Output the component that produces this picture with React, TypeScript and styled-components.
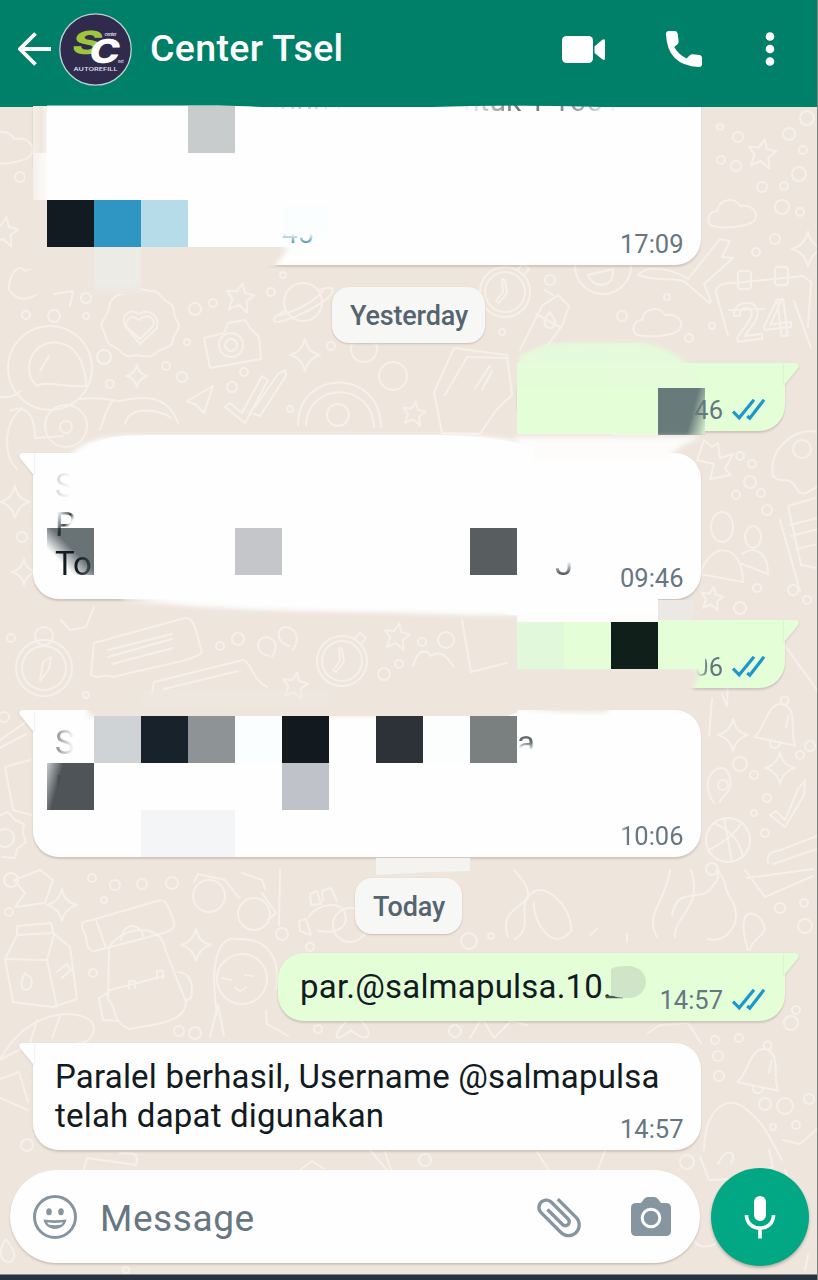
import React from "react";
import styled, { createGlobalStyle, css } from "styled-components";

const colors = {
  header: "#018069",
  paper: "#eee5dd",
  doodle: "#f7f0ea",
  incoming: "#fefefe",
  outgoing: "#e4fed8",
  ink: "#111b21",
  muted: "#667781",
  ticks: "#1b97cb",
  icon: "#8696a0",
  accent: "#02a884",
};

const GlobalStyle = createGlobalStyle`
  * { box-sizing: border-box; }
  body { margin: 0; background: ${colors.paper}; font-family: Roboto, sans-serif; }
`;

const Screen = styled.div`
  position: relative;
  width: 818px;
  height: 1280px;
  display: flex;
  flex-direction: column;
  overflow: hidden;
  background: ${colors.paper};
  border-right: 1px solid #7c8281;
`;

const Wallpaper = styled.svg`
  position: absolute;
  inset: 0;
  fill: none;
  stroke: ${colors.doodle};
  stroke-width: 2;
  stroke-linecap: round;
  stroke-linejoin: round;
`;

const Header = styled.header`
  position: relative;
  flex: none;
  display: flex;
  align-items: center;
  height: 107px;
  padding: 0 41px 9px 18px;
  background: ${colors.header};
  margin-right: -1px;
`;

const Avatar = styled.svg`
  margin-left: 7px;
  flex: none;
`;

const Title = styled.h1`
  margin: 0 auto 2px 18px;
  color: #fff;
  font-size: 37.5px;
  line-height: 44px;
  font-weight: 500;
  letter-spacing: 0.35px;
`;

const Actions = styled.div`
  display: flex;
  align-items: center;
  gap: 61px;
`;

const Chat = styled.main`
  position: relative;
  flex: none;
  display: flex;
  flex-direction: column;
  height: 1063px;
`;

const DatePill = styled.div<{ $gap: number; $width: number }>`
  align-self: center;
  flex: none;
  display: flex;
  align-items: center;
  justify-content: center;
  width: ${(p) => p.$width}px;
  height: 56px;
  margin-top: ${(p) => p.$gap}px;
  padding: 1px 0 0 1px;
  border-radius: 17px;
  background: #f7f7f5;
  box-shadow: 0 1px 2px rgba(80, 60, 40, 0.22);
  color: #54656f;
  font-size: 27px;
  font-weight: 500;
  letter-spacing: -0.15px;
`;

const Bubble = styled.section<{ $out?: boolean; $gap?: number; $width?: number; $height: number; $scrolled?: boolean }>`
  position: relative;
  flex: none;
  display: flex;
  width: ${(p) => p.$width ?? 668}px;
  height: ${(p) => p.$height}px;
  margin-top: ${(p) => p.$gap ?? 0}px;
  padding: 13px 17.5px 7.5px 22px;
  border-radius: 26px;
  box-shadow: 0 1.5px 2px rgba(90, 70, 50, 0.2);
  ${(p) =>
    p.$out
      ? css`
          align-self: flex-end;
          margin-right: 32px;
          padding-right: 20px;
          border-top-right-radius: 0;
          background: ${colors.outgoing};
        `
      : css`
          align-self: flex-start;
          margin-left: 33px;
          border-top-left-radius: 0;
          background: ${colors.incoming};
        `}
  ${(p) => p.$scrolled && css`border-top-right-radius: 0;`}
`;

const TailShape = styled.svg<{ $out?: boolean }>`
  position: absolute;
  top: 0;
  overflow: visible;
  ${(p) => (p.$out ? "right: -14px; transform: scaleX(-1);" : "left: -14px;")}
  filter: drop-shadow(0 1px 1px rgba(90, 70, 50, 0.16));
`;

const Message = styled.p`
  flex: 1 1 0;
  min-width: 0;
  margin: 0.5px 0 0;
  color: ${colors.ink};
  font-size: 33px;
  line-height: 39px;
  letter-spacing: 0.2px;
  white-space: pre;
`;

const Meta = styled.div`
  position: relative;
  flex: none;
  align-self: flex-end;
  display: flex;
  align-items: center;
  gap: 9px;
  margin-left: auto;
`;

const Time = styled.time<{ $fade?: number }>`
  color: ${colors.muted};
  font-size: 25.5px;
  line-height: 27px;
  ${(p) => p.$fade && css`mask-image: linear-gradient(90deg, transparent ${p.$fade}px, #000 ${p.$fade + 12}px);`}
`;

/* Pixelation grid laid over the private part of a bubble. */
const Mosaic = styled.div<{ $top: number; $edge?: boolean }>`
  position: absolute;
  inset: ${(p) => p.$top}px auto auto 0;
  display: grid;
  grid-template-columns: ${(p) => (p.$edge ? "14px" : "")} repeat(5, 47px) ${(p) => (p.$edge ? "repeat(8, 47px)" : "")};
  grid-auto-rows: 47px;
`;

const Tile = styled.i<{ $col: number; $row?: number; $span?: number; $rows?: number; $fill: string }>`
  grid-column: ${(p) => p.$col} / span ${(p) => p.$span ?? 1};
  grid-row: ${(p) => p.$row ?? 1} / span ${(p) => p.$rows ?? 1};
  background: ${(p) => p.$fill};
`;

const Smudge = styled.svg`
  position: absolute;
  inset: 0 auto auto 0;
  overflow: visible;
`;

/* Part of a letter left visible at the edge of a smudge. */
const Remnant = styled.span<{ $x: number; $y: number; $mask: string; $color?: string; $size?: number }>`
  position: absolute;
  left: ${(p) => p.$x}px;
  top: ${(p) => p.$y}px;
  color: ${(p) => p.$color ?? colors.ink};
  font-size: ${(p) => p.$size ?? 33}px;
  line-height: 39px;
  white-space: pre;
  mask-image: ${(p) => p.$mask};
`;

const Footer = styled.footer`
  position: relative;
  display: flex;
  align-items: center;
  gap: 11px;
  height: 93px;
  padding-left: 10px;
`;

const Composer = styled.div`
  display: flex;
  align-items: center;
  width: 690px;
  height: 93px;
  padding: 0 28px 0 22px;
  border-radius: 47px;
  background: #fefefe;
  box-shadow: 0 1.5px 2px rgba(90, 70, 50, 0.25);
`;

const Placeholder = styled.span`
  margin: 5px auto 0 22px;
  color: ${colors.muted};
  font-size: 37px;
  line-height: 44px;
  letter-spacing: 0.6px;
`;

const MicButton = styled.button`
  display: flex;
  align-items: center;
  justify-content: center;
  width: 98px;
  height: 98px;
  flex: none;
  padding: 0;
  border: 0;
  border-radius: 50%;
  background: ${colors.accent};
  box-shadow: 0 2px 3px rgba(60, 50, 40, 0.3);
`;

const SystemBar = styled.div`
  position: relative;
  height: 6px;
  margin: auto -1px 0 0;
  background: #26333e;
  border-top: 1px solid #87898a;
`;

const CameraSlot = styled.span`
  display: flex;
  margin-left: 44px;
`;

const Tail = ({ out }: { out?: boolean }) => (
  <TailShape $out={out} width="15" height="24" viewBox="0 0 15 24">
    <path d="M15 0H4C.4 0-.9 3 1.300 5.600L14 21h1z" fill={out ? colors.outgoing : colors.incoming} />
  </TailShape>
);

const Ticks = () => (
  <svg width="33" height="23" viewBox="0 0 33 23" fill="none" stroke={colors.ticks} strokeWidth="3.200">
    <path d="M1 12.500l6.200 6.300L22 .8M15.200 17l2.600 2.200L32 .8" />
  </svg>
);

const Star = ({ x, y, s = 1 }: { x: number; y: number; s?: number }) => (
  <path transform={`translate(${x} ${y}) rotate(10) scale(${s})`} strokeWidth={2 / s} d="M0-14l4 9 10 1-7 7 3 11-10-6-9 6 2-11-7-7 10-1z" />
);
const Sparkle = ({ x, y, s = 1 }: { x: number; y: number; s?: number }) => (
  <path transform={`translate(${x} ${y}) scale(${s})`} strokeWidth={2 / s} d="M0-16Q2-3 15 0 3 3 0 16-3 3-15 0-3-3 0-16z" />
);
const Cloud = ({ x, y, s = 1 }: { x: number; y: number; s?: number }) => (
  <path transform={`translate(${x} ${y}) scale(${s})`} strokeWidth={2 / s} d="M-20 13c-7-5-3-15 5-15 2-12 18-15 23-5 12-2 20 7 14 15-7 6-30 8-42 5z" />
);
const Bell = ({ x, y }: { x: number; y: number }) => (
  <g transform={`translate(${x} ${y}) rotate(12)`}>
    <path d="M-22 20c9-10 5-36 20-38 18 0 13 28 22 38zM-6 20c0 9 10 9 11 0M7-8v12" />
    <circle cy="-22" r="4" />
  </g>
);
const Clock = ({ x, y }: { x: number; y: number }) => (
  <g transform={`translate(${x} ${y})`}>
    <circle r="25" />
    <circle r="20" />
    <path d="M-3-13l3 1 2 13-8 10-3-2 7-9zM13-23l5-5 6 5-4 5" />
  </g>
);

const dots = [
  [20, 177, 5], [26, 315, 4], [54, 316, 6], [86, 298, 5], [86, 316, 3], [195, 309, 6], [213, 303, 4], [271, 292, 4], [283, 275, 3], [187, 342, 3],
  [104, 357, 7], [166, 366, 4], [182, 377, 5], [232, 387, 5], [290, 409, 3], [244, 372, 4], [110, 384, 4], [331, 346, 4], [738, 137, 5], [720, 127, 3],
  [789, 134, 6], [807, 118, 7], [721, 160, 4], [736, 166, 5], [803, 150, 4], [799, 174, 7], [762, 187, 5], [784, 186, 4], [782, 207, 7], [800, 212, 4],
  [775, 239, 5], [756, 252, 4], [550, 280, 5], [622, 316, 5], [667, 297, 3], [689, 338, 4], [712, 326, 3], [502, 332, 3], [740, 456, 4], [752, 464, 4],
  [750, 482, 6], [736, 495, 4], [761, 493, 4], [767, 510, 5], [757, 588, 4], [793, 590, 5], [740, 608, 6], [807, 600, 4], [11, 638, 4], [220, 646, 4],
  [238, 639, 6], [384, 674, 6], [399, 664, 4], [86, 695, 3], [446, 640, 8], [422, 642, 4], [22, 537, 5], [4, 717, 5], [740, 764, 7], [754, 775, 4],
  [800, 755, 4], [810, 746, 5], [767, 798, 4], [754, 813, 3], [765, 833, 4], [712, 869, 6], [11, 880, 7], [92, 878, 4], [115, 885, 5], [142, 884, 5],
  [172, 883, 6], [104, 900, 3], [9, 912, 4], [93, 973, 4], [282, 934, 6], [310, 947, 4], [179, 1031, 5], [195, 1033, 6], [318, 1029, 4], [469, 941, 8],
  [491, 936, 3], [780, 908, 5], [804, 903, 4], [805, 926, 7], [791, 1023, 7], [796, 1010, 4], [739, 1038, 4], [715, 1040, 4], [718, 1056, 5], [719, 1076, 5],
  [765, 1104, 6], [785, 1106, 8], [809, 1099, 5], [773, 1127, 3], [796, 1125, 4], [27, 1145, 6], [455, 1031, 6], [126, 1270, 3], [425, 1160, 6], [687, 1162, 7],
];

const Doodles = () => (
  <Wallpaper width="818" height="1280" viewBox="0 0 818 1280" aria-hidden>
    {dots.map(([x, y, r]) => (
      <circle key={`${x}-${y}`} cx={x} cy={y} r={r} />
    ))}
    <Cloud x={5} y={147} s={1.15} />
    <Cloud x={732} y={213} />
    <Cloud x={657} y={322} />
    <Star x={762} y={153} />
    <Star x={4} y={231} />
    <Star x={240} y={297} />
    <Star x={712} y={598} s={0.8} />
    <Star x={397} y={636} s={0.9} />
    <Star x={414} y={413} s={0.8} />
    <Star x={295} y={685} s={0.9} />
    <Sparkle x={137} y={376} s={0.7} />
    <Sparkle x={305} y={355} />
    <Sparkle x={15} y={502} />
    <Sparkle x={808} y={249} s={1.1} />
    <Sparkle x={733} y={735} />
    <Sparkle x={780} y={768} />
    <Sparkle x={62} y={905} />
    <Sparkle x={196} y={945} />
    <Sparkle x={24} y={572} s={0.8} />
    <Bell x={780} y={722} />
    <Bell x={763} y={1067} />
    <Clock x={505} y={292} />
    <Clock x={342} y={661} />
    {/* heart cookie */}
    <path d="M110 303c6-12 15-8 19-11 9-8 17 1 24-1 8 1 8 9 16 12 8 4 2 12 9 19 4 8-6 11-5 19-2 9-13 6-18 13-8 6-15-1-23 2-9 2-11-7-19-10-8-2-6-11-11-18-3-8 8-12 8-25z" />
    <path d="M140 339l-12-11c-5-7 3-15 11-8 8-8 18-1 14 6zM125 326c-5-12 6-18 14-12 10-6 21 2 18 14l-17 16zM9 285c3-17 12-20 16-14 10-6 21 3 19 13-1 10-16 17-25 14-6-3-11-6-10-13z" />
    {/* planet, camera, tumbling arrow */}
    <circle cx="303" cy="302" r="19" />
    <path d="M286 310c-8 5-14 8-12 11 4 6 60-20 59-31-1-4-7-2-14 0M280 315c14-3 34-13 43-24" />
    <path d="M204 338l20-5 4-10 17-3 6 9 8 8 2 22-51 9zM54 294l19-3-3 15" />
    <circle cx="231" cy="345" r="12" />
    <circle cx="231" cy="345" r="6" />
    {/* astronaut */}
    <circle cx="50" cy="368" r="42" />
    <path d="M31 379c-8-23 10-42 33-35 20 7 23 39 22 42-17 2-42-6-49 0zM40 371l9-15M0 397c17 1 20-6 20-6M80 399c24-3 33 2 40 2 35-8 50 0 58 22M22 408c-19 15-19 49-5 61M36 438l27-2M35 438c0-37-22-29-25-27M113 401c-10 10-9 25-14 29M125 424c5-20 37-14 46-6" />
    <circle cx="66" cy="426" r="21" />
    <circle cx="66" cy="427" r="6" />
    <path d="M187 401l26-15-9 27-8-8zM225 407l5-4 12 10 20-37 6 4-23 43zM255 407l23-33 7-4 1 6-26 40-6-2" />
    <path d="M298 425c0-56 82-58 83 2M306 425c2-44 66-44 68 2" />
    <circle cx="338" cy="415" r="11" />
    <circle cx="364" cy="349" r="13" />
    <circle cx="393" cy="376" r="14" />
    {/* smiley, aeroplane, bottle */}
    <circle cx="603" cy="266" r="28" />
    <path d="M588 275l25-6c2 20-20 20-25 6zM638 275c12-13 37-4 50 4l32-40 10 2-8 16 11 1-29 26c6 14 9 21 4 18l-23-20c-11-6-23 1-47-7zM520 350l22-44 16-11 11 11-7 20-18 24M536 314l24 13M545 290l8 5M550 312c-16 17 8 21 5 9z" />
    {/* calendar */}
    <path d="M728 336l-12-43c0-7 4-10 18-10l69-7 8 6-3 45M729 310l35-1M794 301l17 47" />
    <rect x="738" y="271" width="13" height="18" rx="3" />
    <rect x="775" y="267" width="13" height="18" rx="3" />
    <text x="735" y="342" fontFamily="Roboto, sans-serif" fontSize="52" fontWeight="500" transform="rotate(-7 735 342)">24</text>
    {/* gem, puzzle, doughnut, people, newspaper */}
    <path d="M442 433l-8-41 20-44 53 7 5 40-15 14-17 25zM445 395l22-38 40 1M475 388l15-22M482 390l10-19M704 440l8 7 6-4 2 15 13-4-8 15 6 6-21 4 4-15-17-4zM773 477c-7-32 31-54 48-43M773 474c3 9 12 5 17 7 8 4 6 15 16 12l13-7M700 574c12-36 43-29 43 8zM742 564l26 10c0-24-16-28-26-20M788 506l27-8M788 506l13 59 16 3M780 520l20 71M790 525l27-7M791 536l27-7M796 549l21-5" />
    <ellipse cx="722" cy="527" rx="11" ry="15" />
    <ellipse cx="753" cy="537" rx="8" ry="11" />
    <circle cx="802" cy="449" r="9" />
    {/* compass, letters, quotes */}
    <circle cx="44" cy="668" r="28" />
    <circle cx="44" cy="668" r="22" />
    <circle cx="44" cy="636" r="9" />
    <path d="M40 681l3-19 8-5-2 12z" />
    <path d="M91 675l3-32 91-25c11-1 12 20 17 34-5 9-54 15-88 25-15-4-15 3-23-2zM108 650l64-16M108 657l64-18M112 664l61-16M152 694l2-12 89-22c9 3 9 19 24 27M164 689l74-18M269 656c-15-3-13-19-3-19 14 3 10 13 6 20M289 646c-14-4-13-20-2-19 14 4 10 17 6 23M61 620l9 10 16-3 8-20M462 620l9 52 36-9M413 666c7-23 16-13 18-10 10-7 16 1 23 11" />
    <path d="M714 803c-20-27 13-49 16-24 3 15-8 15-10 23M770 815l6-4 9 9 13-31 7-9-1 15-19 32zM712 699l-3 37M722 694l5 12 1-30M786 647l31 43" />
    <circle cx="723" cy="785" r="5" />
    <circle cx="728" cy="840" r="22" />
    <path d="M714 823c15 7 25 15 29 34M709 850c14-7 26-17 32-26M724 818l8 44M768 863c-2-6 2-12 10-12l39-15M773 864l44-15M0 740l26-18M0 748l26-14M5 767l25-7M5 767l8 43 18 5M0 815l8-3 7 8 9 4-1 10 3 8-9 7-2 9-13-1" />
    <circle cx="5" cy="838" r="9" />
    {/* milk carton, film, backpack */}
    <path d="M5 959l12-24 36-2 17 14 7 52-24 8-40-5zM5 959l42 1 10 47M17 935v-9l34-3 3 12-7 25M25 973c-12 22 11 21 6 5zM57 972l10-8 4 6-9 8M14 880l26-10 13 10-8 23-30 4 10-14zM82 928c0-9 1-5 10-8l65-19c9-3 10 2 17 21 2 8-7 10-14 12l-65 17c-11 1-6-16-13-23zM96 920l10 28" />
    <path d="M108 999l1-52c15-22 53-24 56 2l21 53c0 23-42 23-56 27-11-3-16-14-17-23zM110 990l54-14M119 1021l-16-1-4-22 10-6M178 972c15 1 15 16 13 26l-4 2M121 940c2-19 20-17 22-4M129 989v-8h6v7M157 979v-8h6v7" />
    <circle cx="209" cy="896" r="16" />
    <circle cx="254" cy="914" r="16" />
    <path d="M194 882l4-8 27 6 14 18M242 873l20 7 3 9M262 893l14 20-8 7M280 870l-1 55" />
    {/* paw, sloth, feather */}
    <path d="M309 917c8-15 35-16 36-3 4 14-9 20-27 17M300 931l-1-10 7-2 5 16zM311 905l-1-11 7-3 4 13zM323 901l-1-10 9-3 6 13M217 1015c-10-69 9-79 20-76 43-2 42 38 39 50M210 1037l8-32 6 31M266 1010l1 14 21 12M222 978l9 2M245 975l8 1M235 987c4 6 8 4 11 0" />
    <circle cx="242" cy="979" r="25" />
    <circle cx="350" cy="925" r="17" />
    <path d="M0 1060c24-46 71-54 91-39 6 7 2 20-10 22-21 5-29-1-53 2zM30 1043l7-23M52 1038l8-22M0 1079l19-7 9 30M0 1098l28 12" />
    {/* octopus arms, feather, ghost */}
    <path d="M508 937c-14-40 46-24 6-67M515 939c20-12 1-31 15-44 12-16 43 11 41 36-19 24-39-12-37-29M670 870c-5 34-26 44-13 67M691 870c13 37-18 47-16 67M672 915c6-32 32-10 41-30 12-10-2-17 5-14 10 10 4 17 15 31 10 24-9 42-25 37M745 870l20 27 48-21M747 878l66-9M748 950c-9-28-4-44 11-33 16 20-7 17-9 33M590 935l7-6M627 942v-8M704 1150c1-41 22-54 38-44 22 15 28 33 40 54M783 1140l17 4 18-16M350 1018c-20 18-16 27 1 12 17 15 25 5 9-10M648 1033l12-8 28-2 13 20M470 1038l12-20 12 20 17-17 16 4" />
    <path d="M10 1262c-14 0-9-16-4-23 12 16 9 19 4 23zM84 1169l3-11 49 7c4-17-8-10-16-12M300 1170l12-9 12 8M370 1150l17 20M385 1152l6 18M700 1157l9 23 25-1 39-12-4-17M718 1164c8-19 20-11 13-1M690 1230c4 20 16 18 25 14M808 1255l-3 15M537 1152l12 18M605 1151l-7 18M785 1170l16 39" />
  </Wallpaper>
);

export default function App() {
  return (
    <Screen>
      <GlobalStyle />
      <Doodles />

      <Header>
        <svg width="34" height="34" viewBox="0 0 34 34" fill="none" stroke="#fff" strokeWidth="3.800">
          <path d="M33 17H3M17.500 1.500L2 17l15.500 15.500" />
        </svg>
        <Avatar width="73" height="73" viewBox="0 0 73 73">
          <circle cx="36.500" cy="36.500" r="35.700" fill="#302b4d" stroke="#bcd5d4" strokeWidth="1.300" />
          <text transform="translate(11.500 41) skewX(-12) scale(1.420 1)" fontFamily="Inter, sans-serif" fontWeight="800" fontSize="32" fill="#9fc63b">S</text>
          <text transform="translate(28.500 49.500) skewX(-12) scale(1.240 1)" fontFamily="Inter, sans-serif" fontWeight="800" fontSize="33" fill="#fff">C</text>
          <text x="45.500" y="22.500" textLength="12" fontFamily="Inter, sans-serif" fontWeight="700" fontStyle="italic" fontSize="4.500" fill="#d7d6e2">center</text>
          <text x="59" y="49.500" textLength="5.500" lengthAdjust="spacingAndGlyphs" fontFamily="Inter, sans-serif" fontWeight="700" fontStyle="italic" fontSize="4.500" fill="#d7d6e2">net</text>
          <text x="14.500" y="57.500" textLength="44" lengthAdjust="spacingAndGlyphs" fontFamily="Inter, sans-serif" fontWeight="600" fontSize="5.200" fill="#dddbe6">AUTOREFILL</text>
        </Avatar>
        <Title>Center Tsel</Title>
        <Actions>
          <svg width="43" height="32" viewBox="0 0 43 32" fill="#fff">
            <rect y="3" width="31" height="27" rx="4.500" />
            <path d="M32.500 13.500L40 7q3-2 3 1.200V25q0 3.200-3 1L32.500 20z" />
          </svg>
          <svg width="36" height="36" viewBox="0 0 36 36" fill="#fff">
            <path d="M0 3Q0 0 3 0h6q2.300 0 2.700 2.500l.9 7.500q.3 2-1 3.300L8.200 16Q12.500 23.500 20.500 27.500l3.300-3.300q1.300-1.200 3.200-1l6.200.8q2.800.4 2.800 3v6q0 3-3 3Q1 34.500 0 3z" />
          </svg>
          <svg width="14" height="36" viewBox="0 0 14 36" fill="#fff">
            <circle cx="7" cy="5.500" r="4.300" />
            <circle cx="7" cy="18" r="4.300" />
            <circle cx="7" cy="30.500" r="4.300" />
          </svg>
        </Actions>
      </Header>

      <Chat>
        <Bubble $height={158} $scrolled>
          <Smudge width="668" height="158">
            <defs>
              <filter id="soft" x="-10%" y="-30%" width="120%" height="160%">
                <feGaussianBlur stdDeviation="2.500" />
              </filter>
            </defs>
            <path d="M14-1.500H185Q300 2 380-.5T610 0V5H14z" fill="#fefefe" />
            <path d="M-8 60H0V139H250l-16 22H-8z" fill={colors.paper} />
            <path d="M-4 140H256L240 162H-4z" fill={colors.paper} filter="url(#soft)" />
          </Smudge>
          <Mosaic $top={-1} $edge>
            <Tile $col={1} $fill="linear-gradient(90deg, #f4eee8, #efe6de 60%, #f7f3ef)" />
            <Tile $col={1} $row={2} $fill="linear-gradient(90deg, #f5f0ea, #fdfcfb)" />
            <Tile $col={1} $row={3} $rows={2} $fill={colors.paper} />
            <Tile $col={5} $fill="#c8cccd" />
            <Tile $col={2} $row={3} $fill="#121b21" />
            <Tile $col={3} $row={3} $fill="#2f96c4" />
            <Tile $col={4} $row={3} $fill="#b6dce9" />
            <Tile $col={5} $row={3} $span={2} $fill="#fefefe" />
            <Tile $col={7} $row={3} $fill="linear-gradient(#fefefe, #fafefe 30%, #fefefe)" />
            <Tile $col={3} $row={4} $fill="linear-gradient(#ecebe6, #ecebe6 75%, #ede7e0)" />
          </Mosaic>
          <Remnant $x={249} $y={107} $size={28} $color="#287f9f" $mask="linear-gradient(transparent 50%, #000 80%)">45</Remnant>
          <Remnant $x={230} $y={-28} $size={30} $color="#65777a" $mask="linear-gradient(90deg, transparent, rgba(0,0,0,.4) 50%, transparent)">nnnn1</Remnant>
          <Remnant $x={430} $y={-26} $size={30} $mask="linear-gradient(90deg, transparent, rgba(0,0,0,.6) 35%, rgba(0,0,0,.5) 65%, transparent)">ntuk 1 1001</Remnant>
          <Smudge width="668" height="158">
            <path d="M205-30H645V0H570Q480-3 400 0H230L205-2z" fill={colors.header} />
          </Smudge>
          <Meta><Time>17:09</Time></Meta>
        </Bubble>

        <DatePill $gap={22} $width={153}>Yesterday</DatePill>

        <Bubble $out $gap={20} $width={268} $height={68}>
          <Tail out />
          <Smudge width="268" height="68">
            <path d="M3 10V-7Q28-20 65-20H120Q148-20 175 5V30H3z" fill="#e4fbd9" filter="url(#soft)" />
            <path d="M0 0H188V71H0z" fill={colors.outgoing} />
            <path d="M30-20H93V25H0V0Q16-16 30-20z" fill="#e5fada" opacity=".55" />
            <path d="M93-20H125Q170-8 188 25H93z" fill="#e6f8dc" opacity=".6" />
          </Smudge>
          <Meta><Time>09:46</Time><Ticks /></Meta>
          <Mosaic $top={25}>
            <Tile $col={3} $fill={colors.outgoing} />
            <Tile $col={4} $fill="linear-gradient(105deg, #687a7a 68%, rgba(104,122,122,.15) 97%)" />
          </Mosaic>
        </Bubble>

        <Bubble $gap={22} $height={146}>
          <Tail />
          <Smudge width="668" height="146">
            <path d="M36 5Q49-17 100-17H440Q480-15 512-4L530 10H36z" fill="#fefefe" filter="url(#soft)" />
            <path d="M480-16H668L650-8 632 6H500z" fill="#fdfcfb" filter="url(#soft)" />
            <path d="M90 135V146Q180 157 270 158T440 162H620V130z" fill="#fefefe" filter="url(#soft)" />
            <path d="M62-10Q75-18 110-18H410Q460-17 500-6V20H62zM500 125H625V169H540Q500 164 470 161z" fill="#fefefe" />
            <path d="M625 147H660V168H625z" fill="#ebe8e6" />
          </Smudge>
          <Mosaic $top={75} $edge>
            <Tile $col={2} $fill="linear-gradient(225deg, #697275 45%, rgba(105,114,117,0) 72%)" />
            <Tile $col={6} $fill="#c5c6ca" />
            <Tile $col={11} $fill="#585d5f" />
          </Mosaic>
          <Remnant $x={22} $y={13} $mask="linear-gradient(90deg, rgba(0,0,0,.18), transparent 80%)">S</Remnant>
          <Remnant $x={22} $y={52} $mask="linear-gradient(120deg, rgba(0,0,0,.1) 20%, rgba(0,0,0,.8) 48%, transparent 62%)">P</Remnant>
          <Remnant $x={22} $y={91} $mask="linear-gradient(90deg, #000 60%, rgba(0,0,0,.55))">To</Remnant>
          <Remnant $x={522} $y={91} $mask="linear-gradient(transparent 45%, rgba(0,0,0,.8) 80%)">J</Remnant>
          <Meta><Time>09:46</Time></Meta>
        </Bubble>

        <Bubble $out $gap={21} $width={268} $height={68}>
          <Tail out />
          <Smudge width="268" height="68">
            <path d="M-6 0H4V49H176V76H-6z" fill={colors.paper} filter="url(#soft)" />
            <path d="M-4 49H170Q188 49 180 60L170 74H-4z" fill={colors.paper} filter="url(#soft)" />
            <path d="M-4 50H172V73H-4z" fill={colors.paper} />
            <path d="M0-5H141V2H0z" fill="#fdfcfb" />
          </Smudge>
          <Meta><Time $fade={37}>10:06</Time><Ticks /></Meta>
          <Mosaic $top={2}>
            <Tile $col={1} $fill="#e2f8da" />
            <Tile $col={2} $fill={colors.outgoing} />
            <Tile $col={3} $fill="#111f1b" />
            <Tile $col={4} $fill={colors.outgoing} />
          </Mosaic>
        </Bubble>

        <Bubble $gap={22} $height={147}>
          <Tail />
          <Smudge width="668" height="147">
            <path d="M55-5H470Q520 4 575 2V-5H470L475 6H55z" fill={colors.paper} filter="url(#soft)" />
            <path d="M62-8H474Q488-2 484 3L474 6H62z" fill={colors.paper} />
            <path d="M108-20H296V-4H108z" fill="#ede9e3" opacity=".5" />
            <path d="M343 148H437V161Q390 162 343 165z" fill="#f4f3ef" />
          </Smudge>
          <Mosaic $top={6} $edge>
            <Tile $col={3} $fill="#cfd3d5" />
            <Tile $col={4} $fill="#18222a" />
            <Tile $col={5} $fill="#8e9396" />
            <Tile $col={6} $fill="#fbfefe" />
            <Tile $col={7} $fill="#121a20" />
            <Tile $col={9} $fill="#2d3138" />
            <Tile $col={10} $fill="#fbfefd" />
            <Tile $col={11} $fill="#7a7f80" />
            <Tile $col={2} $row={2} $fill="linear-gradient(105deg, rgba(79,84,88,.3), #4f5458 28%)" />
            <Tile $col={7} $row={2} $fill="#bfc2c9" />
            <Tile $col={4} $row={3} $span={2} $fill="#f4f5f6" />
          </Mosaic>
          <Remnant $x={22} $y={13} $mask="linear-gradient(90deg, rgba(0,0,0,.5), rgba(0,0,0,.05) 85%)">S</Remnant>
          <Remnant $x={22} $y={52} $mask="linear-gradient(110deg, rgba(0,0,0,.6), transparent 50%)">r</Remnant>
          <Remnant $x={484} $y={13} $mask="linear-gradient(190deg, rgba(0,0,0,.65) 48%, transparent 66%)">a</Remnant>
          <Meta><Time $fade={-4}>10:06</Time></Meta>
        </Bubble>

        <DatePill $gap={21} $width={107}>Today</DatePill>

        <Bubble $out $gap={19} $width={507} $height={68}>
          <Tail out />
          <Message>par.@salmapulsa.10.</Message>
          <Smudge width="507" height="68">
            <path d="M328 44h17" stroke="#4c5b50" strokeWidth="2.500" />
            <path d="M333 16q4-3 16-3c26 0 24 32 1 32q-12 0-17-3z" fill="#d0e5c8" />
          </Smudge>
          <Meta><Time>14:57</Time><Ticks /></Meta>
        </Bubble>

        <Bubble $gap={22} $height={107}>
          <Tail />
          <Message>{"Paralel berhasil, Username @salmapulsa\ntelah dapat digunakan"}</Message>
          <Meta><Time>14:57</Time></Meta>
        </Bubble>
      </Chat>

      <Footer>
        <Composer>
          <svg width="46" height="46" viewBox="0 0 46 46">
            <circle cx="23" cy="23" r="20.500" fill="none" stroke={colors.icon} strokeWidth="3" />
            <ellipse cx="17" cy="17.700" rx="2.800" ry="3.500" fill={colors.icon} />
            <ellipse cx="29" cy="17.700" rx="2.800" ry="3.500" fill={colors.icon} />
            <path d="M11.500 25.500Q23 27 34.500 25.500C32.500 38 13.500 38 11.500 25.500z" fill={colors.icon} />
            <path d="M15 28.200Q23 29.600 31 28.200L29.500 30.500Q23 31.800 16.500 30.500z" fill="#fefefe" />
          </svg>
          <Placeholder>Message</Placeholder>
          <svg width="54" height="54" viewBox="0 0 24 24" fill={colors.icon}>
            <path transform="rotate(-45 12 12)" d="M16.500 6v11.500c0 2.210-1.790 4-4 4s-4-1.790-4-4V5c0-1.380 1.120-2.500 2.500-2.500s2.500 1.120 2.500 2.500v10.500c0 .55-.45 1-1 1s-1-.45-1-1V6H10v9.500c0 1.380 1.120 2.500 2.500 2.500s2.500-1.120 2.500-2.500V5c0-2.210-1.790-4-4-4S7 2.790 7 5v12.500c0 3.040 2.460 5.500 5.500 5.500s5.500-2.460 5.500-5.500V6h-1.500z" />
          </svg>
          <CameraSlot>
            <svg width="42" height="40" viewBox="0 0 42 40">
              <path d="M6 6h5l3-4q1.500-2 4-2h6q2.500 0 4 2l3 4h5q5 0 5 5v23q0 5-5 5H6q-5 0-5-5V11q0-5 5-5z" fill={colors.icon} />
              <circle cx="21" cy="21" r="8.800" fill="none" stroke="#fefefe" strokeWidth="3" />
            </svg>
          </CameraSlot>
        </Composer>
        <MicButton aria-label="Record">
          <svg width="32" height="44" viewBox="0 0 32 44" fill="none" stroke="#fff">
            <rect x="10" y="1" width="12" height="25" rx="6" fill="#fff" stroke="none" />
            <path d="M2.500 20c0 17.500 27 17.500 27 0M16 32.500v11" strokeWidth="3.600" />
          </svg>
        </MicButton>
      </Footer>
      <SystemBar />
    </Screen>
  );
}
